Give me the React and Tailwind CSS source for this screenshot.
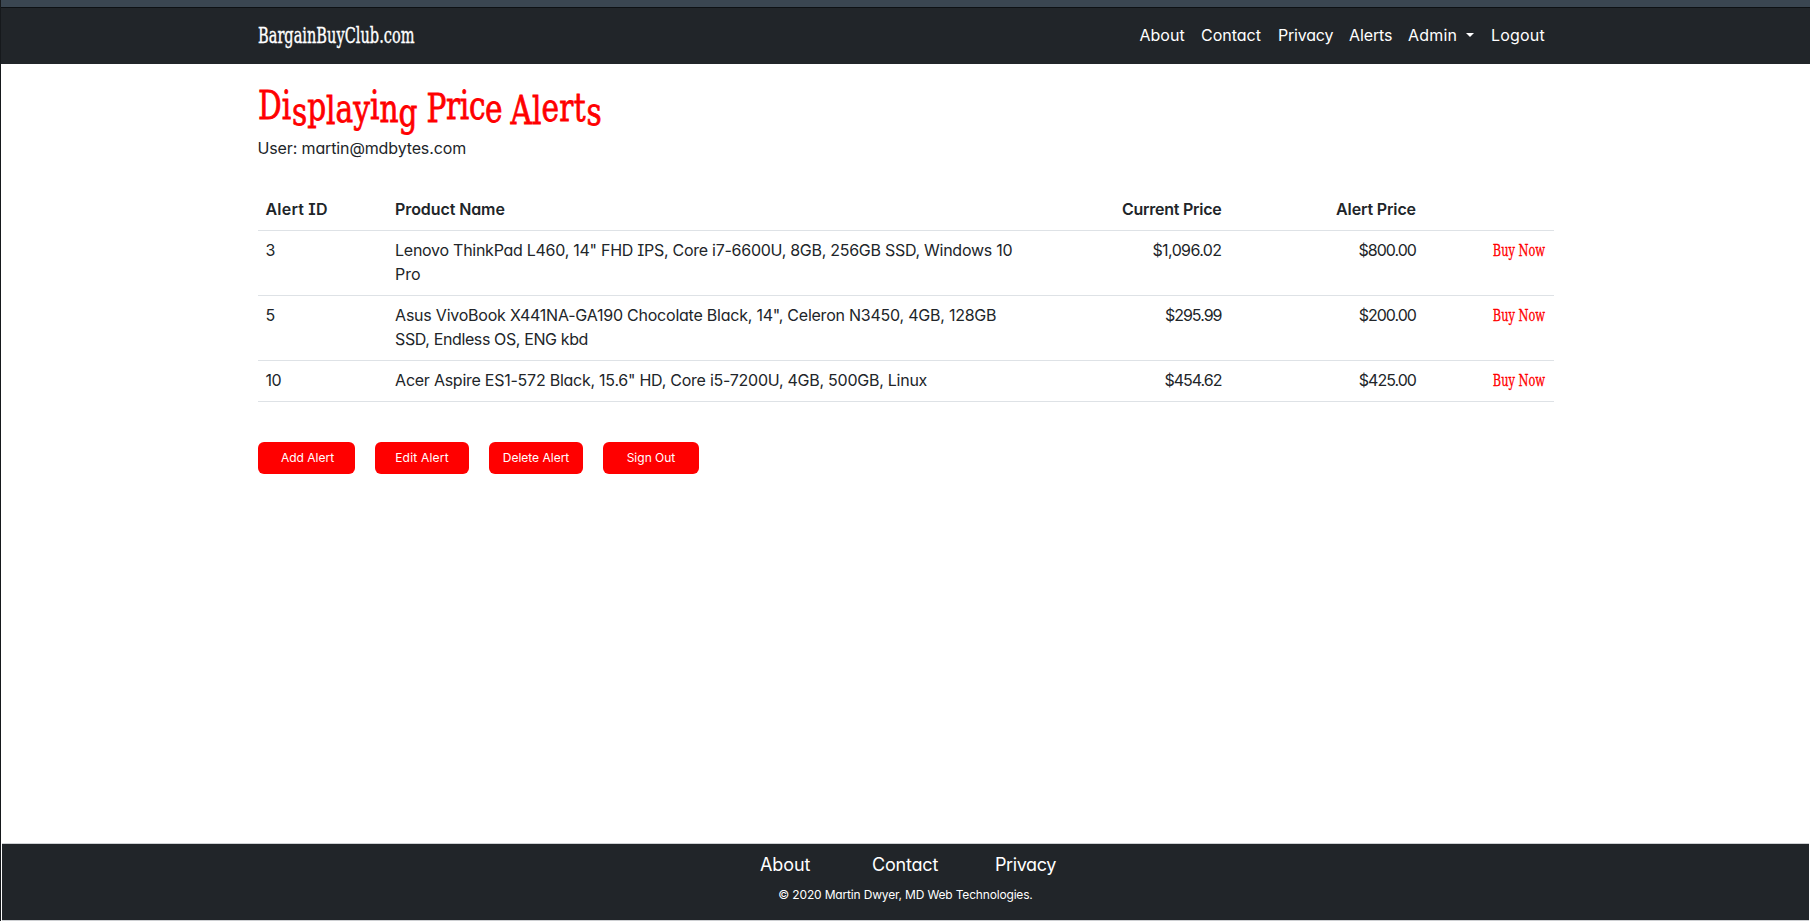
const NAV = [
  { label: "About", cls: "w-[61.5px] tracking-[0px]" },
  { label: "Contact", cls: "w-[77px] tracking-[0px]" },
  { label: "Privacy", cls: "w-[71px] tracking-[-0.2px]" },
  { label: "Alerts", cls: "w-[59px] tracking-[-0.1px]" },
  { label: "Admin", cls: "w-[83px] tracking-[0.2px]", menu: true },
  { label: "Logout", cls: "w-[54px] tracking-[0.2px]" },
];

const ALERTS = [
  {
    id: "3",
    name: ['Lenovo ThinkPad L460, 14" FHD IPS, Core i7-6600U, 8GB, 256GB SSD, Windows 10', "Pro"],
    cls: ["tracking-[-0.27px]", "tracking-[0px]"],
    price: "$1,096.02",
    priceCls: "tracking-[-0.6px]",
    alert: "$800.00",
  },
  {
    id: "5",
    name: ['Asus VivoBook X441NA-GA190 Chocolate Black, 14", Celeron N3450, 4GB, 128GB', "SSD, Endless OS, ENG kbd"],
    cls: ["tracking-[-0.23px]", "tracking-[-0.38px]"],
    price: "$295.99",
    priceCls: "tracking-[-1px]",
    alert: "$200.00",
  },
  {
    id: "10",
    name: ['Acer Aspire ES1-572 Black, 15.6" HD, Core i5-7200U, 4GB, 500GB, Linux'],
    cls: ["tracking-[-0.25px]"],
    price: "$454.62",
    priceCls: "tracking-[-1px]",
    alert: "$425.00",
  },
];

const BUTTONS = [
  { label: "Add Alert", cls: "w-[97px] mr-5 pl-[3px]" },
  { label: "Edit Alert", cls: "w-[94px] mr-5 pl-px tracking-[0.2px]" },
  { label: "Delete Alert", cls: "w-[94px] mr-5 pl-px" },
  { label: "Sign Out", cls: "w-[96px] pl-px" },
];

// The heading's letters dance around the baseline: each pair is a run and its drop.
const TITLE = [
  ["D", "align-[1px]"],
  ["i", "align-[1px] tracking-[1px]"],
  ["s", "align-[-5px]"],
  ["p", "align-[0px]"],
  ["l", "align-[-4px]"],
  ["a", "align-[-2px]"],
  ["y", "align-[-2px]"],
  ["i", "align-[1px]"],
  ["n", "align-[-2px]"],
  ["g", "align-[-6px]"],
  [" P", "align-[-2px] tracking-[-0.5px]"],
  ["ric", "align-[1px] tracking-[-0.5px]"],
  ["e", "align-[-2px] tracking-[-2px]"],
  [" Al", "align-[-4px]"],
  ["er", "align-[-1px] tracking-[0.5px]"],
  ["t", "align-[-1px] tracking-[1px]"],
  ["s", "align-[-5px]"],
];

const GRID = "grid grid-cols-[129.6px_648px_194.4px_194.4px_129.6px] border-b border-[#dee2e6] pt-[7px] pb-[9px]";

function Navbar() {
  return (
    <header className="flex h-[57px] shrink-0 justify-center border-t border-[#0d1114] bg-[#212529] pb-0.5 text-white">
      <div className="flex w-[1296px] items-center justify-between">
        <a className="w-[158px] whitespace-nowrap font-['DejaVu_Serif'] text-[23px] leading-[30px]">
          <span className="inline-block origin-left scale-x-[0.633] [-webkit-text-stroke:0.4px_white]">BargainBuyClub.com</span>
        </a>
        <nav className="flex pr-[8.5px]">
          {NAV.map((n) => (
            <a key={n.label} className={"flex items-center whitespace-nowrap " + n.cls}>
              {n.label}
              {n.menu && (
                <span className="ml-[9px] border-x-[4.8px] border-t-[4.8px] border-x-transparent border-t-white" />
              )}
            </a>
          ))}
        </nav>
      </div>
    </header>
  );
}

function AlertTable() {
  return (
    <section className="mt-[30px] w-[1296px]">
      <div className={GRID + " font-semibold"}>
        <div className="px-2 tracking-[0.2px]">Alert ID</div>
        <div className="px-2 tracking-[-0.1px]">Product Name</div>
        <div className="px-2 text-right tracking-[-0.25px]">Current Price</div>
        <div className="px-2 text-right tracking-[-0.15px]">Alert Price</div>
        <div />
      </div>
      {ALERTS.map((a) => (
        <div key={a.id} className={GRID}>
          <div className="px-2 tracking-[-0.5px]">{a.id}</div>
          <div className="px-2">
            {a.name.map((line, i) => (
              <div key={line} className={"whitespace-nowrap " + a.cls[i]}>{line}</div>
            ))}
          </div>
          <div className={"px-2 text-right " + a.priceCls}>{a.price}</div>
          <div className="px-2 text-right tracking-[-1px]">{a.alert}</div>
          <a className="h-6 whitespace-nowrap px-2 text-right font-['DejaVu_Serif'] text-[17px] leading-[24px] text-[#ff0000]">
            <span className="inline-block origin-right scale-x-[0.67] [-webkit-text-stroke:0.3px_#ff0000]">Buy Now</span>
          </a>
        </div>
      ))}
    </section>
  );
}

export default function App() {
  return (
    <div className="flex h-[921px] w-full flex-col overflow-hidden border-l border-[#16191c] bg-white font-[Inter,sans-serif] text-base leading-6 text-[#212529] [font-feature-settings:'cv11','cv08']">
      <div className="h-[7px] shrink-0 bg-[#3a4651]" />
      <Navbar />
      <main className="mx-auto w-[1296px] flex-1">
        <h1 className="mt-[17px] h-[55px] whitespace-nowrap font-['DejaVu_Serif'] text-[40px] leading-[50px] text-[#ff0000]">
          <span className="inline-block origin-left scale-x-[0.74] whitespace-pre [-webkit-text-stroke:0.8px_#ff0000]">
            {TITLE.map(([run, drop], i) => (
              <span key={i} className={"leading-none " + drop}>{run}</span>
            ))}
          </span>
        </h1>
        <p className="tracking-[-0.13px]">User: martin@mdbytes.com</p>
        <AlertTable />
        <div className="mt-10 flex">
          {BUTTONS.map((b) => (
            <button key={b.label} className={"h-8 whitespace-nowrap rounded-md bg-[#ff0000] text-xs text-white " + b.cls}>
              {b.label}
            </button>
          ))}
        </div>
      </main>
      <footer className="mr-px ml-px flex h-[78px] shrink-0 flex-col items-center border-y border-[#ced0d3] bg-[#212529] text-white">
        <nav className="mt-[7px] grid grid-cols-[112px_123px_61px] pl-[5px] text-lg leading-7">
          <a className="tracking-[-0.1px]">About</a>
          <a className="tracking-[-0.2px]">Contact</a>
          <a className="tracking-[-0.4px]">Privacy</a>
        </nav>
        <p className="mt-[7px] text-xs leading-[18px] tracking-[-0.17px]">© 2020 Martin Dwyer, MD Web Technologies.</p>
      </footer>
    </div>
  );
}
